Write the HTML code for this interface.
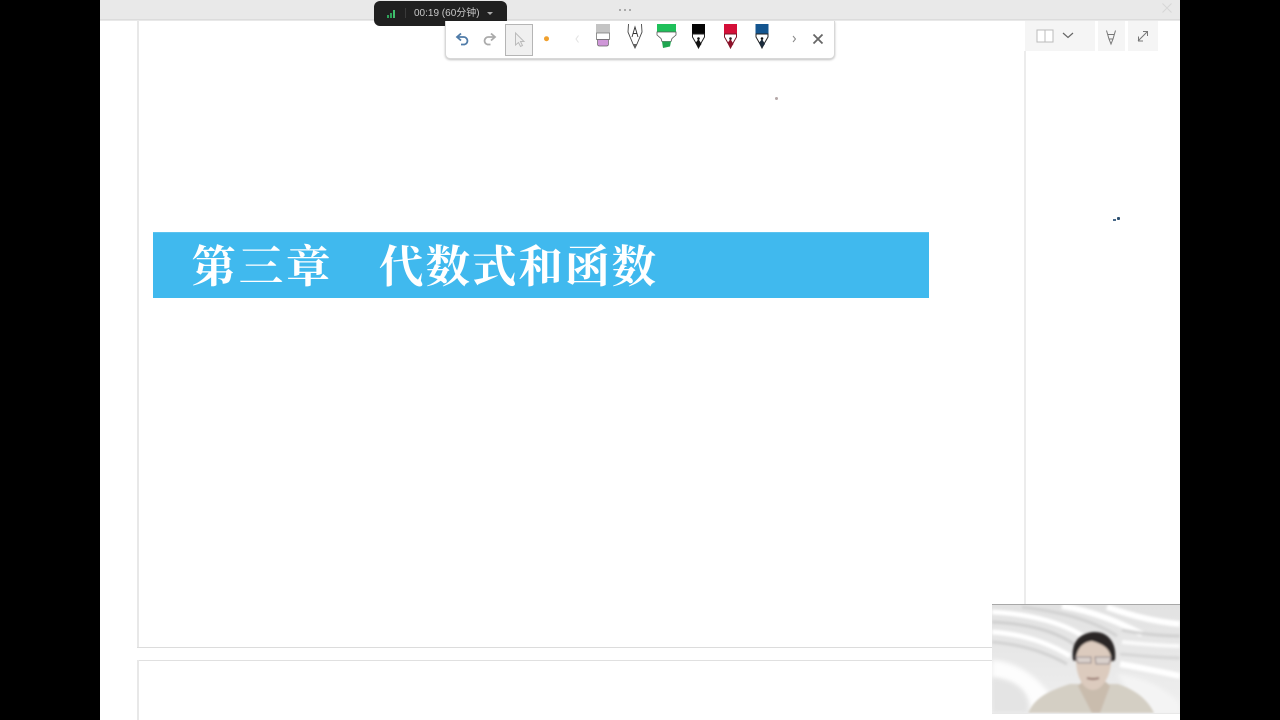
<!DOCTYPE html>
<html><head><meta charset="utf-8">
<style>
html,body{margin:0;padding:0;width:1280px;height:720px;overflow:hidden;background:#000}
*{box-sizing:border-box}
.a{position:absolute}
#p{position:absolute;left:100px;top:0;width:1080px;height:720px;background:#fff;overflow:hidden}
.t{position:absolute;top:.5px;white-space:pre;color:#fff;font:700 44.500px/66px 'Liberation Serif','Noto Serif CJK SC',serif;filter:blur(.35px)}
</style></head>
<body>
<div id="p"></div>
<!-- top strip -->
<div class="a" style="left:100px;top:0;width:1080px;height:20px;background:#e9e9e9;border-bottom:1px solid #dcdcdc"></div>
<div class="a" style="left:100px;top:20px;width:1080px;height:1px;background:#e8e8e8"></div>
<!-- page frames -->
<div class="a" style="left:137px;top:20px;width:2px;height:628px;background:#e8e8e8"></div>
<div class="a" style="left:137px;top:647px;width:856px;height:1px;background:#dcdcdc"></div>
<div class="a" style="left:137px;top:660px;width:856px;height:1px;background:#e0e0e0"></div>
<div class="a" style="left:137px;top:660px;width:2px;height:60px;background:#e8e8e8"></div>
<div class="a" style="left:1024px;top:51px;width:2px;height:553px;background:#ececec"></div>
<!-- right toolbar -->
<div class="a" style="left:1025px;top:21px;width:155px;height:30px;background:#fff"></div>
<div class="a" style="left:1025px;top:21px;width:70px;height:30px;background:#f5f5f5"></div>
<div class="a" style="left:1098px;top:21px;width:27px;height:30px;background:#f5f5f5"></div>
<div class="a" style="left:1128px;top:21px;width:30px;height:30px;background:#f5f5f5"></div>
<svg class="a" style="left:1030px;top:22px;filter:blur(.3px)" width="135" height="28" viewBox="0 0 135 28" fill="none">
<path d="M7 8h8v12H7zM15 8h8v12h-8z" stroke="#bbb" fill="#fff"/>
<path d="M33 11l5 4.500 5-4.500" stroke="#666" stroke-width="1.200"/>
<path d="M76.500 8.500l2.500 8.500h4l2.500-8.500M79 17l2 5 2-5M77.500 12.500h7" stroke="#777" stroke-width="1"/>
<path d="M108 19l9-9M113 9.500h4.500V14M108.500 14.500V19H113" stroke="#777" stroke-width="1"/>
</svg>
<svg class="a" style="left:1160px;top:1px" width="14" height="14" fill="none"><path d="M2.500 2.500l9 9M11.500 2.500l-9 9" stroke="#d8d8d8" stroke-width="1.200"/></svg>
<!-- dots -->
<div class="a" style="left:619px;top:9px;width:2px;height:2px;background:#aaa;box-shadow:5px 0 #aaa,10px 0 #aaa"></div>
<div class="a" style="left:775px;top:97px;width:3px;height:3px;border-radius:50%;background:#b5a8a8"></div>
<div class="a" style="left:1113px;top:219px;width:3px;height:2px;background:#4a6a8a"></div>
<div class="a" style="left:1117px;top:217px;width:3px;height:3px;border-radius:1px;background:#2d5070"></div>
<!-- banner -->
<div class="a" style="left:153px;top:232px;width:776px;height:66px;background:#40b9ee;border-top:1px solid #5cc3ef;overflow:hidden">
<div class="t" style="left:38.500px;letter-spacing:2.700px">第三章</div>
<div class="t" style="left:226px;letter-spacing:2px">代数式和函数</div>
</div>
<!-- timer pill -->
<div class="a" style="left:374px;top:1px;width:133px;height:25px;background:#202020;border-radius:6px"></div>
<svg class="a" style="left:386px;top:8px" width="12" height="11"><path d="M1 7h2v3H1zM4 5h2v5H4z" fill="#2fa35a"/><path d="M7 2h2v8H7z" fill="#3fc06c"/></svg>
<div class="a" style="left:405px;top:8px;width:1px;height:10px;background:#3a3a3a"></div>
<div class="a" style="left:414px;top:6px;white-space:pre;color:#c8c8c8;font:10px/15px 'Liberation Sans','Noto Sans CJK SC',sans-serif;filter:blur(.3px)">00:19 (60分钟)</div>
<div class="a" style="left:487px;top:12px;width:0;height:0;border-left:3px solid transparent;border-right:3px solid transparent;border-top:3px solid #aaa"></div>
<!-- pen toolbar -->
<div class="a" style="left:445px;top:21px;width:390px;height:38px;background:#fff;border:1px solid #d8d8d8;border-top:0;border-radius:0 0 5px 5px;box-shadow:0 1px 2px rgba(0,0,0,.25)"></div>
<div class="a" style="left:505px;top:24px;width:28px;height:32px;background:#f0f0f0;border:1px solid #b5b5b5"></div>
<svg class="a" style="left:445px;top:20px;filter:blur(.25px)" width="390" height="38" viewBox="445 20 390 38" fill="none">
<!-- undo / redo -->
<path d="M461 33.500l-4 3.500 4 3.500" stroke="#4f7ba8" stroke-width="1.800"/><path d="M458 37h5.500a3.800 3.800 0 0 1 1 7.500H461" stroke="#4f7ba8" stroke-width="1.800"/>
<path d="M491 33.500l4 3.500-4 3.500" stroke="#aaa" stroke-width="1.800"/><path d="M494 37h-5.500a3.800 3.800 0 0 0-1 7.500h3" stroke="#aaa" stroke-width="1.800"/>
<!-- cursor -->
<path d="M515.500 33v12l3-2.500 2 4 2-1-2-4h3.500z" stroke="#bbb" fill="#eee"/>
<circle cx="546.500" cy="38.700" r="2.500" fill="#f0a02e"/>
<path d="M578.500 35.500l-2.500 3.500 2.500 3.500" stroke="#e2e2e2"/>
<!-- eraser -->
<path d="M596 24h14v9h-14z" fill="#c4c4c4"/><path d="M596.500 33h13v6.500h-13z" fill="#fff" stroke="#777" stroke-width=".8"/><path d="M597.500 39.500h11v4.500q0 2-2 2h-7q-2 0-2-2z" fill="#cf97d8" stroke="#666" stroke-width=".7"/>
<!-- pencil A -->
<path d="M628.500 24l-.5 8 5 12 2 4 2-4 5-12-.5-8" fill="#fff" stroke="#444" stroke-width=".9"/><path d="M632 37l3-10 3 10M633 33.500h4" stroke="#333" stroke-width=".9"/><path d="M633.500 44h3l-1.500 4z" fill="#666"/>
<!-- highlighter -->
<path d="M657 24h19v8h-19z" fill="#1fc05a"/><path d="M657 32h19v3l-4 3.500-1 3H662l-1-3-4-3.500z" fill="#fff" stroke="#555" stroke-width=".8"/><path d="M662 41.500h9l-1 5-7 1.500z" fill="#1fa650"/>
<!-- pens -->
<path d="M692 24h13v10h-13z" fill="#050505"/><path d="M692.500 34h12v3l-4 7-2 4-2-4-4-7z" fill="#fff" stroke="#222"/><path d="M698.500 48l-3-5 3-4 3 5z" fill="#111"/><circle cx="698.500" cy="38.500" r="1.300" fill="#111"/>
<path d="M724 24h13v10h-13z" fill="#d40f38"/><path d="M724.500 34h12v3l-4 7-2 4-2-4-4-7z" fill="#fff" stroke="#7a1326"/><path d="M730.500 48l-3-5 3-4 3 5z" fill="#8d1029"/><circle cx="730.500" cy="38.500" r="1.300" fill="#222"/>
<path d="M755.500 24h13v10h-13z" fill="#14558f"/><path d="M756 34h12v3l-4 7-2 4-2-4-4-7z" fill="#fff" stroke="#222"/><path d="M762 48l-3-5 3-4 3 5z" fill="#1b2b3b"/><circle cx="762" cy="38.500" r="1.300" fill="#111"/>
<path d="M793 36l2.500 3-2.500 3" stroke="#888"/>
<path d="M813.500 34.500l9 9M822.500 34.500l-9 9" stroke="#666" stroke-width="1.800"/>
</svg>
<!-- webcam -->
<svg class="a" style="left:992px;top:604px" width="188" height="109" viewBox="0 0 188 109">
<defs>
<linearGradient id="bg" x1="0" y1="0" x2="0" y2="1"><stop offset="0" stop-color="#e2e2e2"/><stop offset=".5" stop-color="#e8e8e8"/><stop offset="1" stop-color="#f0f0f0"/></linearGradient>
<filter id="b1" x="-10%" y="-10%" width="120%" height="120%"><feGaussianBlur stdDeviation="1.200"/></filter>
<filter id="b3" x="-10%" y="-10%" width="120%" height="120%"><feGaussianBlur stdDeviation="2.500"/></filter>
<filter id="b2" x="-10%" y="-10%" width="120%" height="120%"><feGaussianBlur stdDeviation="1.100"/></filter>
</defs>
<rect width="188" height="109" fill="url(#bg)"/>
<g filter="url(#b1)" fill="none">
<path d="M0 8C40 10 75 20 95 35" stroke="#fff" stroke-width="5"/>
<path d="M0 18C40 20 65 28 85 42" stroke="#cfcfcf" stroke-width="3"/>
<path d="M0 28C30 30 55 38 78 52" stroke="#fff" stroke-width="5"/>
<path d="M0 38C25 40 50 46 75 60" stroke="#d2d2d2" stroke-width="3"/>
<path d="M30 3C70 8 100 16 125 32" stroke="#d2d2d2" stroke-width="3"/>
<path d="M70 2C105 8 130 20 150 30" stroke="#fff" stroke-width="6"/>
<path d="M115 3C140 12 165 18 188 20" stroke="#fff" stroke-width="6"/>
<path d="M130 26C150 30 170 32 188 32" stroke="#d0d0d0" stroke-width="3"/>
<path d="M130 38C150 40 170 42 188 42" stroke="#fafafa" stroke-width="4"/>
<path d="M128 50C150 52 170 54 188 54" stroke="#d6d6d6" stroke-width="3"/>
<path d="M128 60C150 64 170 68 188 72" stroke="#fff" stroke-width="6"/>
</g>
<path d="M0 56C25 58 50 72 70 109H38C40 88 24 76 0 74z" fill="#fdfdfd" filter="url(#b3)"/>
<path d="M0 74C22 76 38 88 36 109H0z" fill="#e4e4e4" filter="url(#b3)"/>
<path d="M125 70C150 72 175 85 188 100V109H150z" fill="#f4f4f4" filter="url(#b3)"/>
<g filter="url(#b2)">
<path d="M36 109C42 96 52 88 78 80L126 80C144 86 156 96 162 109z" fill="#d4cfc4"/>
<path d="M90 78h24l4 4-10 27H100L86 82z" fill="#c9bcad"/>
<path d="M81 56C79 42 84 30 101 28C117 27 125 40 123 56L119 58H85z" fill="#2b2627"/>
<path d="M84 56C84 46 90 38 100 37C110 40 118 44 119 54C120 68 112 86 101 86C90 86 84 70 84 56z" fill="#dccbbe"/>
<path d="M84 53h15v6H86zM103 53h16l-2 7h-13z" fill="#d9d0cb" stroke="#8f8386" stroke-width="1"/>
<path d="M95 74q6 2 12 0" stroke="#9a7a72" stroke-width="2.200" fill="none"/>
</g>
</svg>
<div class="a" style="left:992px;top:604px;width:188px;height:1px;background:#a8a8a8"></div>
<div class="a" style="left:992px;top:713px;width:188px;height:1px;background:#e8e8e8"></div>
</body></html>
